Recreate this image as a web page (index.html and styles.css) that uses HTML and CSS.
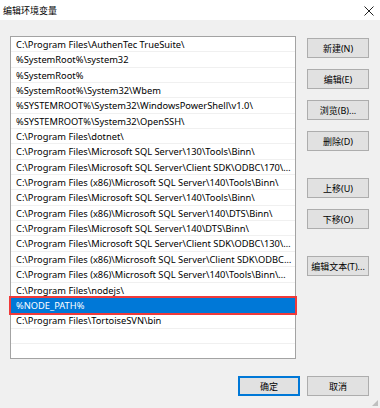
FILE: index.html
```html
<!DOCTYPE html>
<html lang="zh-CN">
<head>
  <meta charset="UTF-8">
  <meta name="viewport" content="width=device-width, initial-scale=1">
  <title>编辑环境变量</title>
  <link rel="stylesheet" href="styles.css">
</head>

<body>

  <div class="dialogo">
    <div class="barra-titulo">
      <span class="titulo">编辑环境变量</span>
      <svg class="cerrar" width="10" height="10" viewBox="0 0 10 10">
        <path d="M0.5 0.5 L9.5 9.5 M9.5 0.5 L0.5 9.5" stroke="#222" stroke-width="1" fill="none"/>
      </svg>
    </div>

    <div class="cuerpo">
      <ul class="lista">
        <li>C:\Program Files\AuthenTec TrueSuite\</li>
        <li>%SystemRoot%\system32</li>
        <li>%SystemRoot%</li>
        <li>%SystemRoot%\System32\Wbem</li>
        <li>%SYSTEMROOT%\System32\WindowsPowerShell\v1.0\</li>
        <li>%SYSTEMROOT%\System32\OpenSSH\</li>
        <li>C:\Program Files\dotnet\</li>
        <li>C:\Program Files\Microsoft SQL Server\130\Tools\Binn\</li>
        <li>C:\Program Files\Microsoft SQL Server\Client SDK\ODBC\170\T...</li>
        <li>C:\Program Files (x86)\Microsoft SQL Server\140\Tools\Binn\</li>
        <li>C:\Program Files\Microsoft SQL Server\140\Tools\Binn\</li>
        <li>C:\Program Files (x86)\Microsoft SQL Server\140\DTS\Binn\</li>
        <li>C:\Program Files\Microsoft SQL Server\140\DTS\Binn\</li>
        <li>C:\Program Files\Microsoft SQL Server\Client SDK\ODBC\130\T...</li>
        <li>C:\Program Files (x86)\Microsoft SQL Server\Client SDK\ODBC\...</li>
        <li>C:\Program Files (x86)\Microsoft SQL Server\140\Tools\Binn\M...</li>
        <li>C:\Program Files\nodejs\</li>
        <li class="seleccionado">%NODE_PATH%</li>
        <li>C:\Program Files\TortoiseSVN\bin</li>
        <li></li>
      </ul>

      <div class="lateral">
        <button>新建(N)</button>
        <button>编辑(E)</button>
        <button>浏览(B)...</button>
        <button>删除(D)</button>
        <button class="separado">上移(U)</button>
        <button>下移(O)</button>
        <button class="separado">编辑文本(T)...</button>
      </div>
    </div>

    <div class="pie">
      <button class="activo">确定</button>
      <button>取消</button>
    </div>

    <span class="agarre"></span>
  </div>

</body>
</html>
```

FILE: styles.css
```css
body {
  margin: 0;
  font-family: "Noto Sans", "Noto Sans CJK SC", sans-serif;
  font-size: 10px;
  color: #000;
  background: #f0f0f0;
}

.dialogo {
  position: relative;
  width: 380px;
  height: 408px;
  background: #f0f0f0;
}

.barra-titulo {
  height: 20px;
  background: #fff;
  display: flex;
  align-items: center;
  justify-content: space-between;
  padding: 1px 6px 0 3px;
  box-sizing: border-box;
}

.titulo {
  font-family: "Noto Sans CJK SC", sans-serif;
  font-size: 9px;
  color: #000;
}

.cerrar {
  display: block;
}

.cuerpo {
  display: flex;
  margin-top: 16px;
  padding-left: 10px;
}

.lista {
  list-style: none;
  margin: 0;
  padding: 0;
  width: 286px;
  height: 323px;
  box-sizing: border-box;
  border: 1px solid #a3a3a3;
  background: #fff;
}

.lista li {
  box-sizing: border-box;
  height: 15.35px;
  line-height: 15px;
  padding: 0 3px 0 5px;
  border-bottom: 1px solid #f0f0f0;
  font-size: 9.3px;
  white-space: nowrap;
  overflow: hidden;
  text-overflow: ellipsis;
  color: #000;
}

.lista li.seleccionado {
  background: #0078d7;
  color: #fff;
  outline: 2px solid #f03a3a;
  border-bottom-color: #0078d7;
}

.lateral {
  display: flex;
  flex-direction: column;
  gap: 11px;
  margin-left: 11px;
  padding-top: 2px;
}

button {
  width: 62px;
  height: 20px;
  padding: 0;
  box-sizing: border-box;
  border: 1px solid #adadad;
  background: #e1e1e1;
  font-family: "Noto Sans", "Noto Sans CJK SC", sans-serif;
  font-size: 9px;
  color: #000;
}

.lateral .separado {
  margin-top: 16px;
}

.pie {
  display: flex;
  justify-content: flex-end;
  gap: 7px;
  margin-top: 17px;
  padding-right: 11px;
}

.pie .activo {
  border: 2px solid #0078d7;
}

.agarre {
  position: absolute;
  right: 2px;
  bottom: 2px;
  width: 6px;
  height: 6px;
  background: radial-gradient(circle, #bbb 0.7px, transparent 0.8px) 0 0 / 2px 2px;
  clip-path: polygon(100% 0, 100% 100%, 0 100%);
}
```
